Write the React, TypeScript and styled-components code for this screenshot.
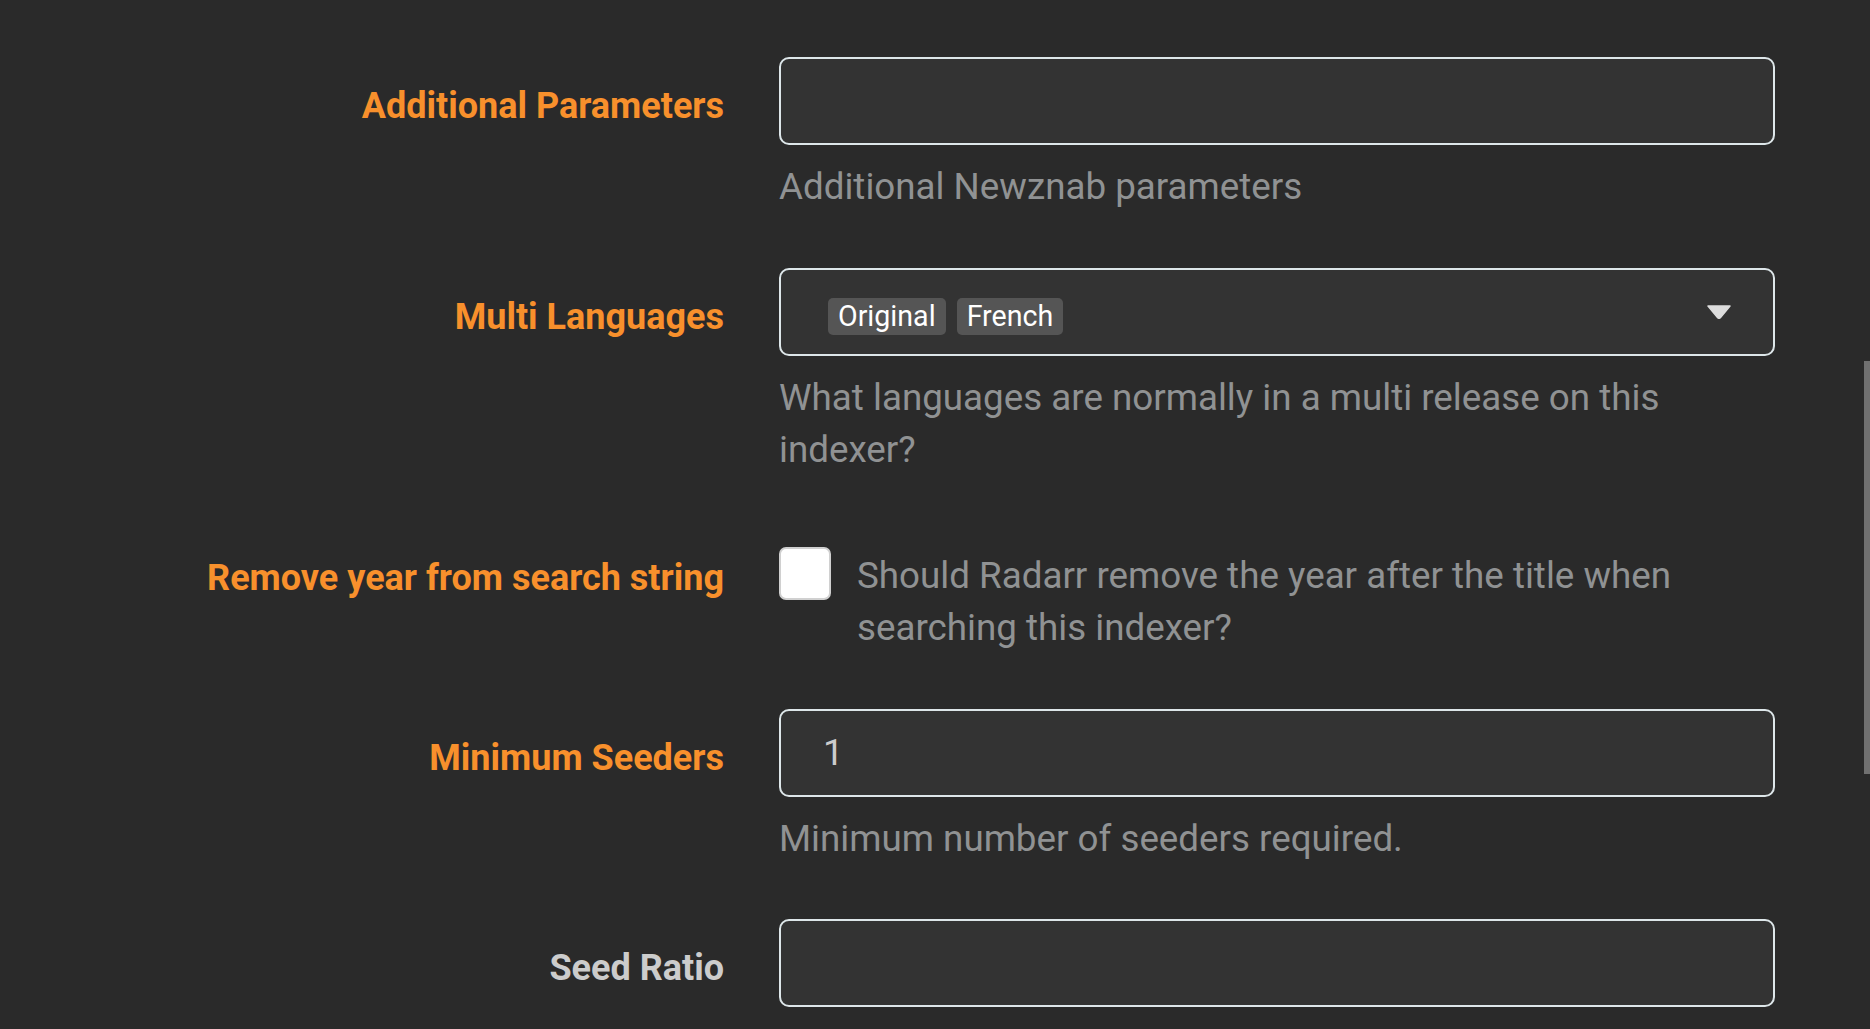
import React from "react";
import styled, { createGlobalStyle } from "styled-components";

const Global = createGlobalStyle`
  html, body { margin: 0; padding: 0; background: #2a2a2a; }
  body { font-family: Roboto, "Noto Sans", "Liberation Sans", sans-serif; overflow: hidden; }
  * { box-sizing: border-box; }
`;

const Page = styled.div`
  width: 1870px;
  height: 1029px;
  background: #2a2a2a;
  padding-top: 57px;
  overflow: hidden;
  position: relative;
`;

const Form = styled.div`
  display: flex;
  flex-direction: column;
`;

const Group = styled.div<{ $mb: number }>`
  display: grid;
  grid-template-columns: 724px 996px;
  column-gap: 55px;
  margin-bottom: ${(p) => p.$mb}px;
`;

const Label = styled.label<{ $advanced?: boolean; $check?: boolean }>`
  text-align: right;
  font-weight: 700;
  font-size: 36px;
  line-height: ${(p) => (p.$check ? "52px" : "88px")};
  padding-top: 5px;
  color: ${(p) => (p.$advanced ? "#f8902c" : "#cccccc")};
`;

const Control = styled.div`
  display: flex;
  flex-direction: column;
`;

const Input = styled.div`
  height: 88px;
  border: 2px solid #dde6e9;
  border-radius: 10px;
  background: #333333;
  color: #cccccc;
  font-size: 36.75px;
  display: flex;
  align-items: center;
  padding-left: 42px;
  padding-right: 42px;
`;

const Help = styled.div`
  margin-top: 16px;
  color: #909293;
  font-size: 36.75px;
  line-height: 52.5px;
`;

const Chips = styled.div`
  display: flex;
  gap: 11px;
  flex: 1;
  padding-left: 5px;
  margin-top: 10px;
`;

const Chip = styled.span`
  background: #555555;
  color: #ffffff;
  border-radius: 5px;
  height: 37px;
  line-height: 37px;
  padding: 0 10px;
  font-size: 28.6px;
`;

const Caret = styled.svg`
  width: 24px;
  height: 14px;
`;

const CheckRow = styled.div`
  display: flex;
  align-items: flex-start;
  gap: 26px;
`;

const Box = styled.div`
  flex: none;
  width: 52px;
  height: 53px;
  border: 2px solid #d0d0d0;
  border-radius: 7px;
  background: #ffffff;
`;

const CheckText = styled.div`
  color: #909293;
  font-size: 36.75px;
  line-height: 52.5px;
  padding-top: 3px;
`;

const Scroll = styled.div`
  position: absolute;
  right: 0;
  top: 361px;
  width: 6px;
  height: 413px;
  background: #707070;
`;

export default function App() {
  return (
    <Page>
      <Global />
      <Form>
        <Group $mb={54}>
          <Label $advanced>Additional Parameters</Label>
          <Control>
            <Input />
            <Help>Additional Newznab parameters</Help>
          </Control>
        </Group>
        <Group $mb={70}>
          <Label $advanced>Multi Languages</Label>
          <Control>
            <Input>
              <Chips>
                <Chip>Original</Chip>
                <Chip>French</Chip>
              </Chips>
              <Caret viewBox="0 0 24 14">
                <path d="M1 1 L23 1 L13.5 12.5 Q12 14 10.5 12.5 Z" fill="#dddddd" stroke="#dddddd" strokeWidth="1.5" strokeLinejoin="round" />
              </Caret>
            </Input>
            <Help>What languages are normally in a multi release on this indexer?</Help>
          </Control>
        </Group>
        <Group $mb={54}>
          <Label $advanced $check>Remove year from search string</Label>
          <Control>
            <CheckRow>
              <Box />
              <CheckText>Should Radarr remove the year after the title when searching this indexer?</CheckText>
            </CheckRow>
          </Control>
        </Group>
        <Group $mb={54}>
          <Label $advanced>Minimum Seeders</Label>
          <Control>
            <Input>1</Input>
            <Help>Minimum number of seeders required.</Help>
          </Control>
        </Group>
        <Group $mb={0}>
          <Label>Seed Ratio</Label>
          <Control>
            <Input />
          </Control>
        </Group>
      </Form>
      <Scroll />
    </Page>
  );
}
